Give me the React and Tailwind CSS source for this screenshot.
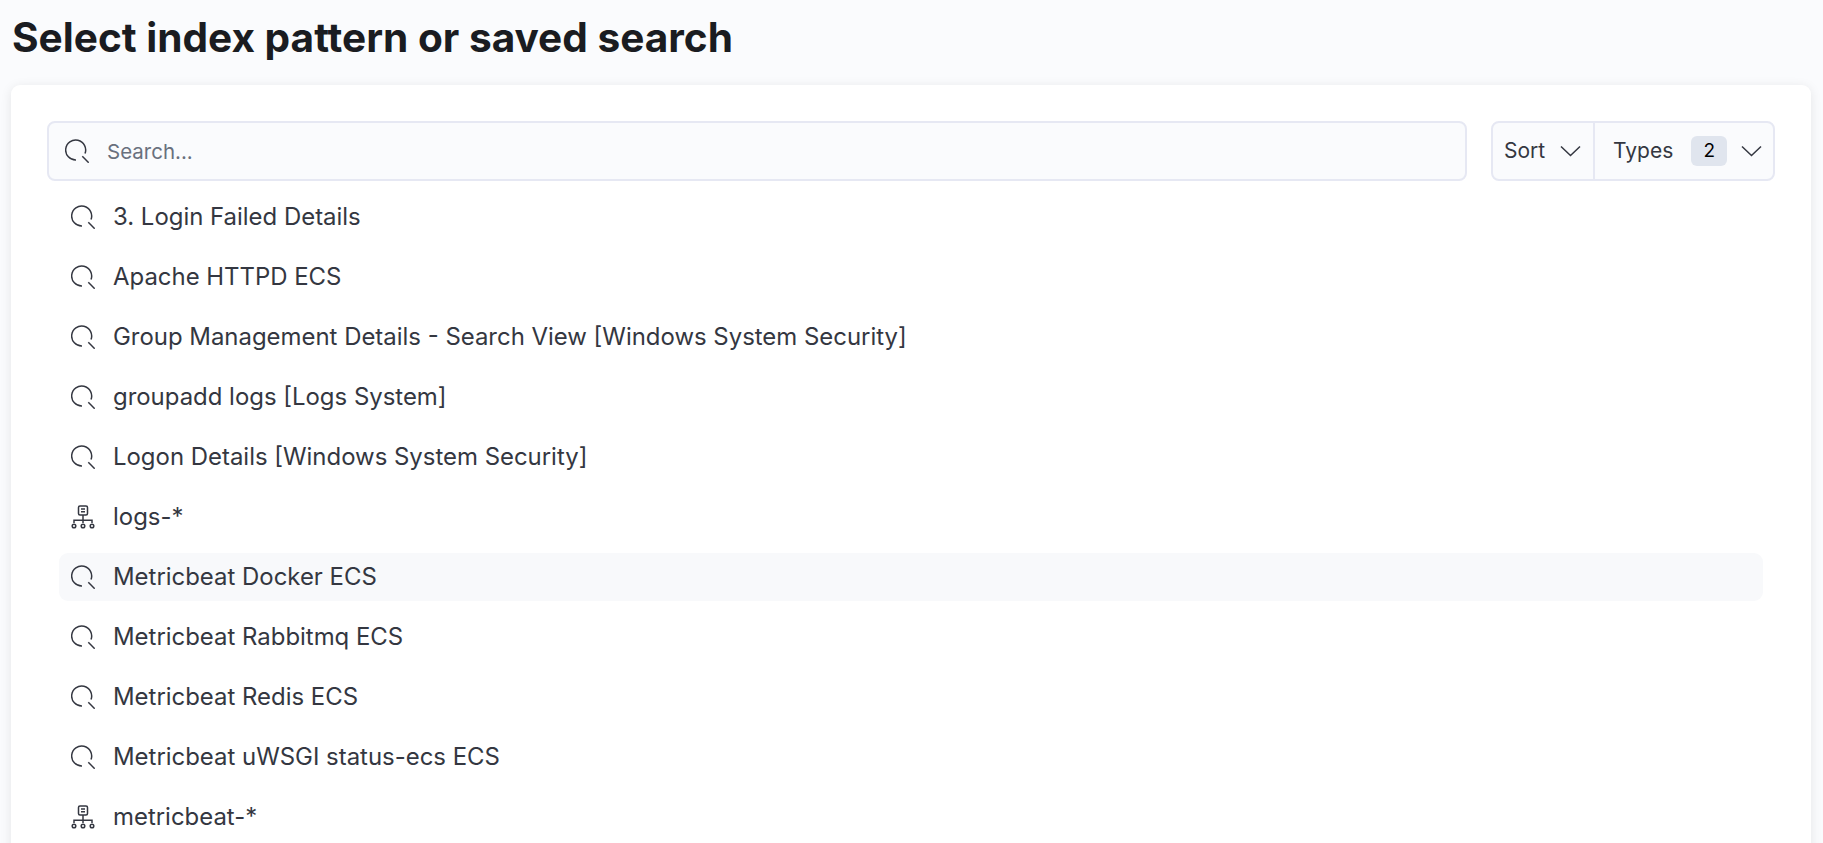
const items = [
  { label: "3. Login Failed Details", type: "search" },
  { label: "Apache HTTPD ECS", type: "search" },
  { label: "Group Management Details - Search View [Windows System Security]", type: "search" },
  { label: "groupadd logs [Logs System]", type: "search" },
  { label: "Logon Details [Windows System Security]", type: "search" },
  { label: "logs-*", type: "index" },
  { label: "Metricbeat Docker ECS", type: "search", active: true },
  { label: "Metricbeat Rabbitmq ECS", type: "search" },
  { label: "Metricbeat Redis ECS", type: "search" },
  { label: "Metricbeat uWSGI status-ecs ECS", type: "search" },
  { label: "metricbeat-*", type: "index" },
];

function SearchIcon() {
  return (
    <svg className="w-[24px] h-[24px] shrink-0 text-[#343741]" viewBox="0 0 24 24" fill="none" stroke="currentColor" strokeWidth="1.5">
      <path d="M11 21A10 10 0 1 1 20 14.6" />
      <path d="M17.3 17.3l6.4 6.4" />
    </svg>
  );
}

function IndexIcon() {
  return (
    <svg className="w-[24px] h-[24px] shrink-0 text-[#343741]" viewBox="0 0 24 24" fill="none" stroke="currentColor" strokeWidth="1.5">
      <rect x="7.5" y="1" width="9" height="9" rx="1.5" />
      <path d="M10 4h4M10 6.8h4" />
      <path d="M12 10v8M3 18v-2.8h18V18" />
      <circle cx="3" cy="21" r="1.8" />
      <circle cx="12" cy="21" r="1.8" />
      <circle cx="21" cy="21" r="1.8" />
    </svg>
  );
}

function Chevron() {
  return (
    <svg className="w-[21px] h-[12px] shrink-0 text-[#343741]" viewBox="0 0 21 12" fill="none" stroke="currentColor" strokeWidth="1.5">
      <path d="M1 1.5L10.5 10.5l9.5-9" />
    </svg>
  );
}

export default function App() {
  return (
    <div className="h-[843px] overflow-hidden bg-[#fafbfd] font-['Inter',sans-serif]">
      <h1 className="h-[85px] pl-[12px] pt-[13px] text-[40.6px] leading-[50px] font-bold text-[#1a1c21]">
        Select index pattern or saved search
      </h1>
      <div className="ml-[11px] mr-[12px] h-[800px] rounded-t-[9px] bg-white shadow-[0_2px_12px_rgba(0,0,0,0.09)] pt-[36px]">
        <div className="flex pl-[36px] pr-[36px] gap-[24px]">
          <div className="flex-1 h-[60px] flex items-center rounded-[8px] border-2 border-[#e6e8f3] bg-[#fafbfd] pl-[16px]">
            <SearchIcon />
            <span className="ml-[18px] pt-[2px] text-[20.5px] text-[#69707d]">Search...</span>
          </div>
          <div className="w-[284px] h-[60px] flex rounded-[8px] border-2 border-[#e6e8f3] bg-[#fafbfd] text-[21px] text-[#343741]">
            <div className="w-[102px] flex items-center pl-[11px] gap-[15px] border-r-2 border-[#e6e8f3]">
              <span>Sort</span>
              <Chevron />
            </div>
            <div className="flex-1 flex items-center pl-[18px]">
              <span>Types</span>
              <span className="ml-[18px] w-[36px] h-[30px] flex items-center justify-center rounded-[6px] bg-[#e0e5ee] text-[#000000] text-[19px]">2</span>
              <span className="ml-[14px]"><Chevron /></span>
            </div>
          </div>
        </div>
        <ul className="mt-[12px] ml-[48px] mr-[48px] flex flex-col gap-[12px]">
          {items.map((item) => (
            <li
              key={item.label}
              className={`h-[48px] flex items-center pl-[12px] rounded-[9px] text-[23.93px] text-[#343741] ${item.active ? "bg-[#f8f9fb]" : ""}`}
            >
              {item.type === "search" ? <SearchIcon /> : <IndexIcon />}
              <span className="ml-[18px]">{item.label}</span>
            </li>
          ))}
        </ul>
      </div>
    </div>
  );
}
